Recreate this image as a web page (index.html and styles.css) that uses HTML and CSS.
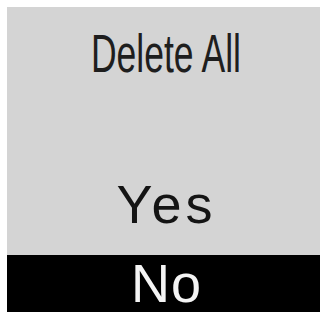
FILE: index.html
```html
<!DOCTYPE html>
<html>
<head>
<meta charset="utf-8">
<link rel="stylesheet" href="styles.css">
</head>
<body>
<div class="dialog">
  <div class="title"><span class="title-text">Delete All</span></div>
  <div class="spacer"></div>
  <div class="option option-yes">Yes</div>
  <div class="option option-no">No</div>
</div>
</body>
</html>
```
FILE: styles.css
```css
html, body {
  margin: 0;
  padding: 0;
  background: #ffffff;
}
body {
  width: 324px;
  height: 315px;
  overflow: hidden;
  font-family: "Liberation Sans", Arial, sans-serif;
}
.dialog {
  margin: 7px 4px 3px 7px;
  width: 313px;
  height: 305px;
  background: #d4d4d4;
  display: flex;
  flex-direction: column;
  box-sizing: border-box;
  padding-top: 17px;
}
.title {
  height: 60px;
  line-height: 60px;
  font-size: 53px;
  color: #1e1e1e;
  text-align: center;
  padding-left: 5px;
}
.title-text {
  display: inline-block;
  transform: scaleX(0.67);
  transform-origin: center;
  white-space: nowrap;
}
.spacer {
  flex: 1;
}
.option {
  text-align: center;
  font-size: 54px;
  padding-left: 6px;
}
.option-yes {
  height: 60px;
  line-height: 60px;
  color: #141414;
  margin-bottom: 21px;
  letter-spacing: 4px;
}
.option-no {
  height: 57px;
  line-height: 57px;
  background: #000000;
  color: #f4f4f4;
  letter-spacing: 1px;
}
```
